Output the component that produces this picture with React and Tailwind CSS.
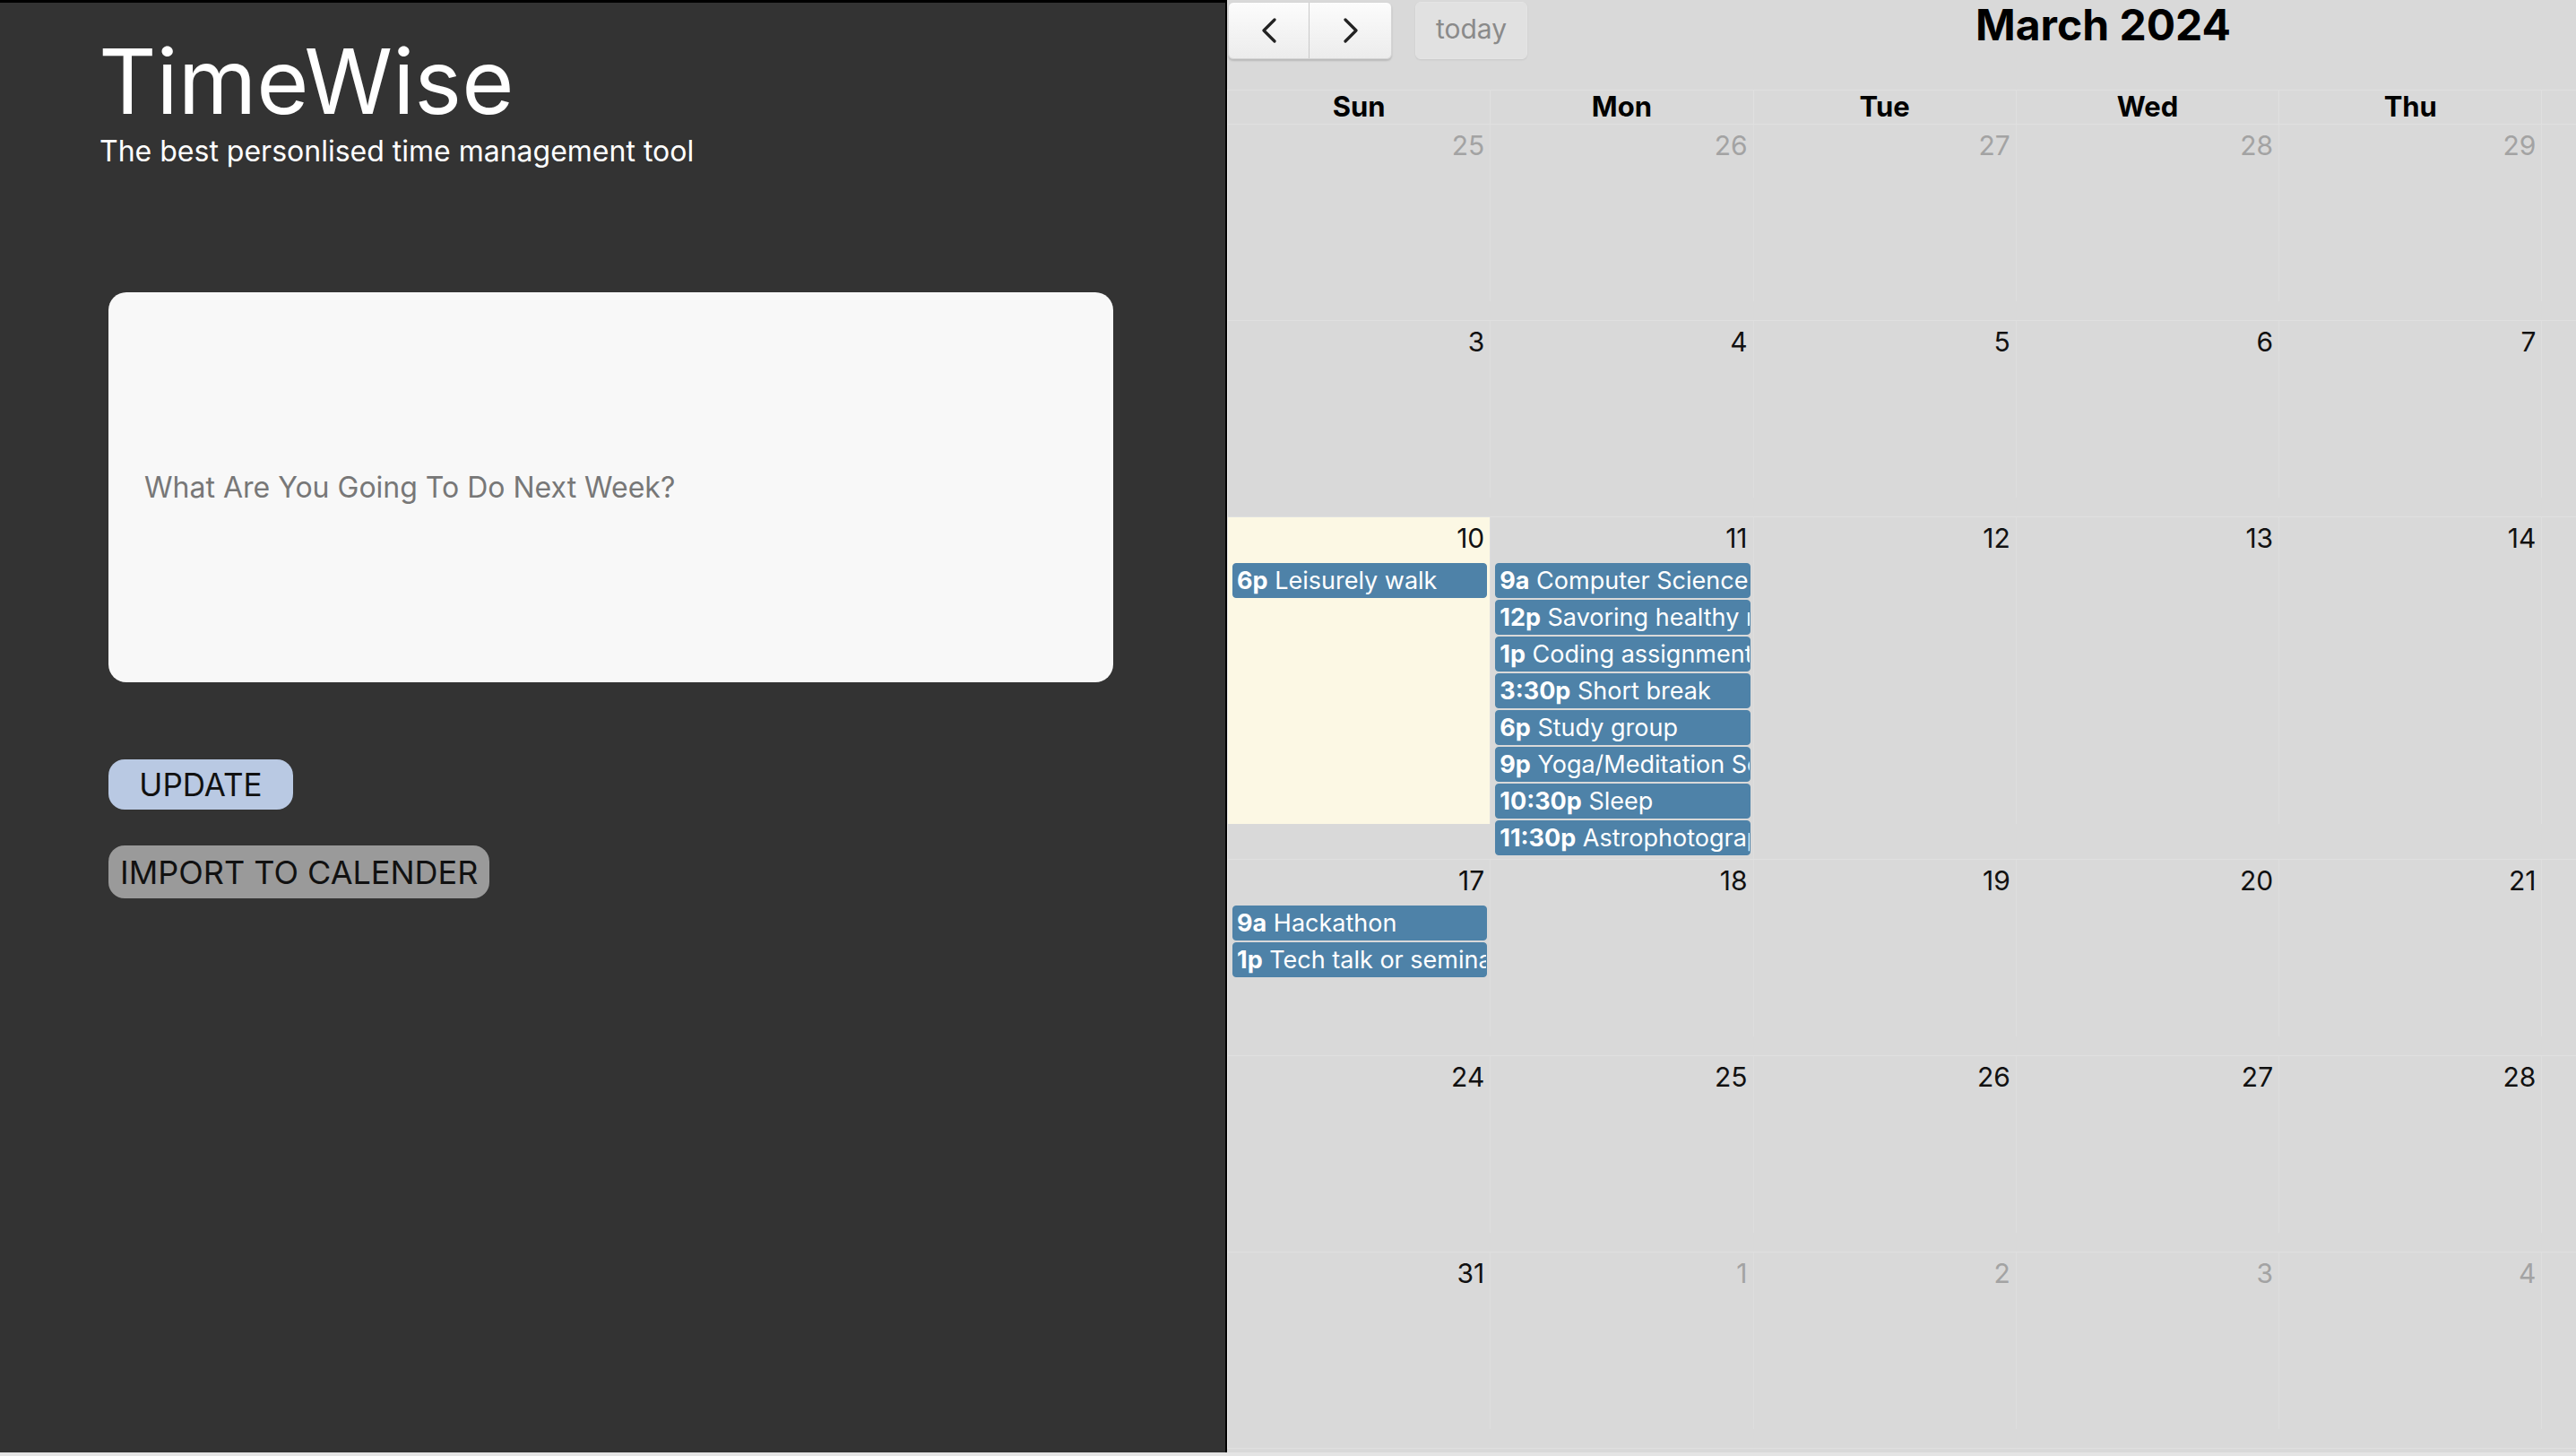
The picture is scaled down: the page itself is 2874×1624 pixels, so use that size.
import React from "react";

const EVENT_BG = "bg-[#4e82a8] border-[#4e82a8]";

function Event({ time, title }) {
  return (
    <div
      className={`ml-[5px] mr-[3px] mb-[2px] h-[39px] rounded-[4px] border ${EVENT_BG} px-[4px] text-[27px] leading-[37px] text-white whitespace-nowrap overflow-hidden`}
    >
      <span className="font-bold">{time}</span> <span>{title}</span>
    </div>
  );
}

const rows = [
  {
    h: "h-[219px]",
    frame: "h-[197px]",
    days: [
      { n: 25, o: true },
      { n: 26, o: true },
      { n: 27, o: true },
      { n: 28, o: true },
      { n: 29, o: true },
      { n: 1 },
      { n: 2 },
    ],
  },
  {
    h: "h-[219px]",
    frame: "h-[197px]",
    days: [3, 4, 5, 6, 7, 8, 9].map((n) => ({ n })),
  },
  {
    h: "h-[382px]",
    frame: "h-[342px]",
    days: [
      { n: 10, today: true, events: [["6p", "Leisurely walk"]] },
      {
        n: 11,
        full: true,
        events: [
          ["9a", "Computer Science lecture"],
          ["12p", "Savoring healthy meal"],
          ["1p", "Coding assignment"],
          ["3:30p", "Short break"],
          ["6p", "Study group"],
          ["9p", "Yoga/Meditation Session"],
          ["10:30p", "Sleep"],
          ["11:30p", "Astrophotography"],
        ],
      },
      { n: 12 },
      { n: 13 },
      { n: 14 },
      { n: 15 },
      { n: 16 },
    ],
  },
  {
    h: "h-[219px]",
    frame: "h-[197px]",
    days: [
      {
        n: 17,
        events: [
          ["9a", "Hackathon"],
          ["1p", "Tech talk or seminar"],
        ],
      },
      { n: 18 },
      { n: 19 },
      { n: 20 },
      { n: 21 },
      { n: 22 },
      { n: 23 },
    ],
  },
  {
    h: "h-[219px]",
    frame: "h-[197px]",
    days: [24, 25, 26, 27, 28, 29, 30].map((n) => ({ n })),
  },
  {
    h: "h-[219px]",
    frame: "h-[197px]",
    days: [
      { n: 31 },
      { n: 1, o: true },
      { n: 2, o: true },
      { n: 3, o: true },
      { n: 4, o: true },
      { n: 5, o: true },
      { n: 6, o: true },
    ],
  },
];

function Chevron({ dir }) {
  return (
    <svg width="20" height="28" viewBox="0 0 20 28" fill="none">
      {dir === "left" ? (
        <polyline points="16,2 4,14 16,26" stroke="#222" strokeWidth="3.2" strokeLinecap="round" strokeLinejoin="round" />
      ) : (
        <polyline points="4,2 16,14 4,26" stroke="#222" strokeWidth="3.2" strokeLinecap="round" strokeLinejoin="round" />
      )}
    </svg>
  );
}

function Calendar() {
  return (
    <div className="shrink-0 w-[2056px] h-full border-l-2 border-black bg-[#d9d9d9]">
      <div className="flex items-start h-[100px] pt-[2px] pl-[1px]">
        <div className="flex rounded-[6px] shadow-[0_2px_2px_rgba(0,0,0,0.15)] border border-[#d4d4d4] bg-gradient-to-b from-[#fcfcfc] to-[#ececec]">
          <button className="w-[90px] h-[62px] flex items-center justify-center border-r border-[#c9c9c9]">
            <Chevron dir="left" />
          </button>
          <button className="w-[91px] h-[62px] flex items-center justify-center">
            <Chevron dir="right" />
          </button>
        </div>
        <button className="ml-[26px] w-[125px] h-[64px] rounded-[6px] bg-[#e1e1e1] border border-[#e4e4e4] shadow-[0_1px_2px_rgba(0,0,0,0.08)] text-[30px] text-[#8a8a8a] flex items-center justify-center pb-[3px]">
          today
        </button>
        <h2 className="ml-[500px] mt-[2px] text-[48px] leading-[48px] font-bold text-black">
          March 2024
        </h2>
      </div>
      <div className="w-[2054px] border-l border-[#e6e6e6]">
        <div className="grid grid-cols-7 h-[39px] border-t border-b border-[#e0e0e0]">
          {["Sun", "Mon", "Tue", "Wed", "Thu", "Fri", "Sat"].map((d) => (
            <div key={d} className="border-r border-[#e0e0e0] text-center text-[31px] leading-[36px] font-bold text-black">
              {d}
            </div>
          ))}
        </div>
        {rows.map((r, ri) => (
          <div key={ri} className={`grid grid-cols-7 ${r.h} border-b border-[#e0e0e0]`}>
            {r.days.map((d, di) => (
              <div key={di} className="min-w-0">
                <div
                  className={`${d.full ? "h-full" : r.frame} border-r border-[#dedede] ${d.today ? "bg-[#fcf8e4]" : ""}`}
                >
                  <div
                    className={`text-right pr-[6px] pt-[5px] text-[30px] leading-[36px] ${d.o ? "text-[#a3a3a3]" : "text-[#111]"}`}
                  >
                    {d.n}
                  </div>
                  {d.events && (
                    <div className="mt-[10px]">
                      {d.events.map(([t, title], ei) => (
                        <Event key={ei} time={t} title={title} />
                      ))}
                    </div>
                  )}
                </div>
              </div>
            ))}
          </div>
        ))}
      </div>
    </div>
  );
}

function LeftPanel() {
  return (
    <div className="shrink-0 w-[1367px] h-full bg-[#333333] border-t-[3px] border-black flex flex-col items-start">
      <h1 className="ml-[110px] mt-[38px] text-[100px] leading-[100px] font-normal text-white">
        TimeWise
      </h1>
      <p className="ml-[111px] mt-[12px] text-[32px] leading-[32px] text-white">
        The best personlised time management tool
      </p>
      <input
        type="text"
        placeholder="What Are You Going To Do Next Week?"
        className="ml-[121px] mt-[141px] w-[1121px] h-[435px] rounded-[20px] bg-[#f8f8f8] pl-[40px] text-[32px] text-[#222] placeholder:text-[#777] outline-none"
      />
      <button className="ml-[121px] mt-[86px] w-[206px] h-[56px] rounded-[18px] bg-[#b9c9e3] text-[35px] text-[#111] flex items-center justify-center">
        UPDATE
      </button>
      <button className="ml-[121px] mt-[40px] h-[59px] px-[13px] rounded-[18px] bg-[#9a9a9a] text-[36px] text-[#111] flex items-center justify-center">
        IMPORT TO CALENDER
      </button>
    </div>
  );
}

export default function App() {
  return (
    <div className="w-[2874px] h-[1624px] overflow-hidden bg-[#e4e4e4] font-['Inter',sans-serif]">
      <div className="flex h-[1620px]">
        <LeftPanel />
        <Calendar />
      </div>
    </div>
  );
}
